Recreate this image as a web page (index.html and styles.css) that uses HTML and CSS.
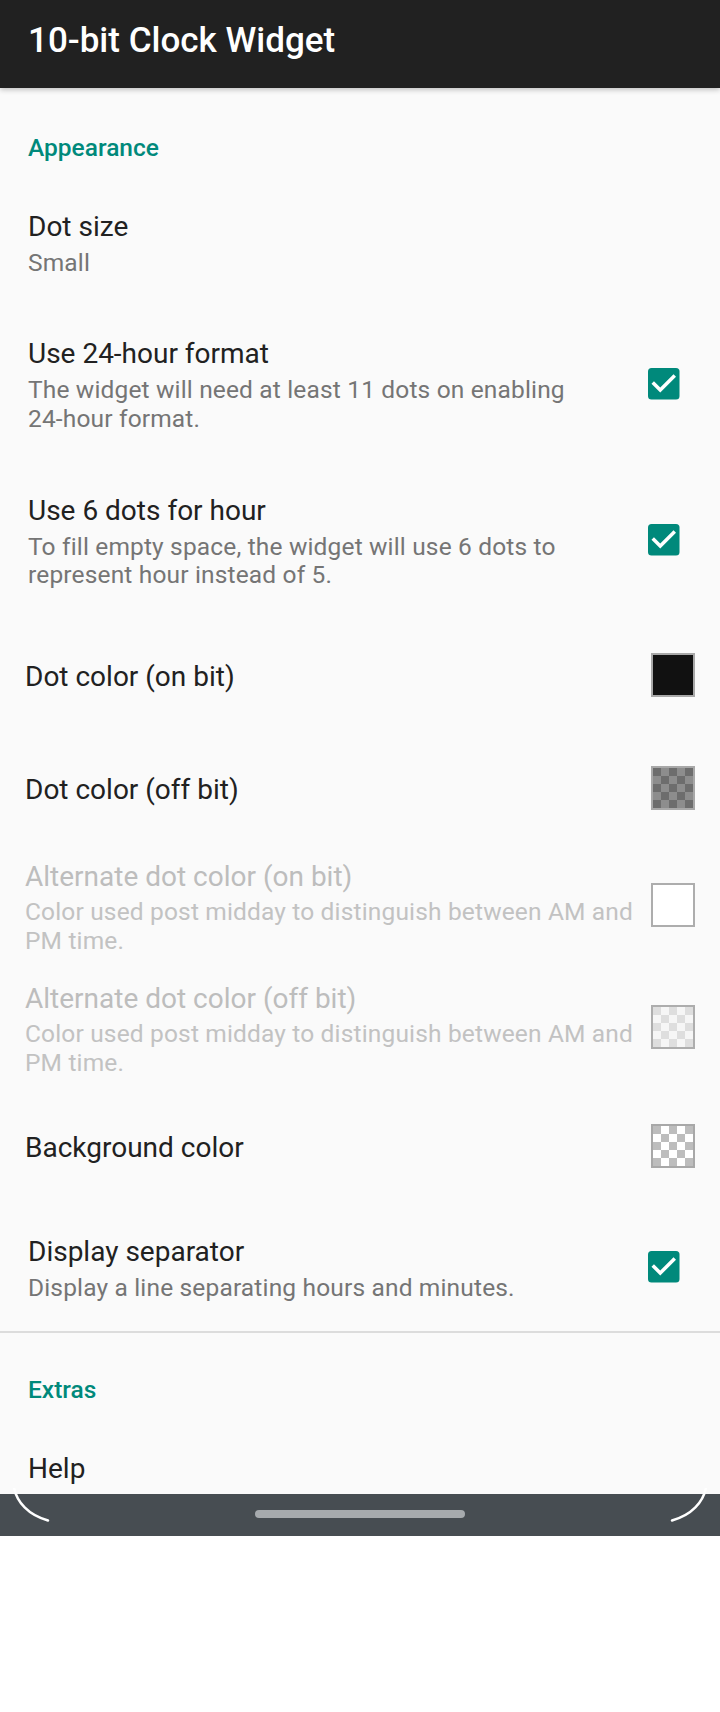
FILE: index.html
```html
<!DOCTYPE html>
<html>
<head>
<meta charset="utf-8">
<title>10-bit Clock Widget</title>
<link rel="stylesheet" href="styles.css">
</head>
<body>
<div class="screen">
  <header class="appbar">10-bit Clock Widget</header>
  <main class="content">
    <div class="cat">Appearance</div>

    <div class="pref">
      <div class="pref-text">
        <div class="pref-title">Dot size</div>
        <div class="pref-summary">Small</div>
      </div>
    </div>

    <div class="pref">
      <div class="pref-text">
        <div class="pref-title">Use 24-hour format</div>
        <div class="pref-summary">The widget will need at least 11 dots on enabling <span class="nowrap">24-hour</span> format.</div>
      </div>
      <svg class="checkbox" viewBox="3 3 18 18" width="31.5" height="31.5"><rect x="3" y="3" width="18" height="18" rx="2" fill="#00897b"/><path d="M10 17l-5-5 1.41-1.41L10 14.17l7.59-7.59L19 8l-9 9z" fill="#fff"/></svg>
    </div>

    <div class="pref">
      <div class="pref-text">
        <div class="pref-title">Use 6 dots for hour</div>
        <div class="pref-summary">To fill empty space, the widget will use 6 dots to represent hour instead of 5.</div>
      </div>
      <svg class="checkbox" viewBox="3 3 18 18" width="31.5" height="31.5"><rect x="3" y="3" width="18" height="18" rx="2" fill="#00897b"/><path d="M10 17l-5-5 1.41-1.41L10 14.17l7.59-7.59L19 8l-9 9z" fill="#fff"/></svg>
    </div>

    <div class="pref-color">
      <div class="pref-text">
        <div class="pref-title">Dot color (on bit)</div>
      </div>
      <div class="swatch swatch-black"></div>
    </div>

    <div class="pref-color">
      <div class="pref-text">
        <div class="pref-title">Dot color (off bit)</div>
      </div>
      <div class="swatch swatch-offbit"></div>
    </div>

    <div class="pref-color pref-disabled">
      <div class="pref-text">
        <div class="pref-title">Alternate dot color (on bit)</div>
        <div class="pref-summary">Color used post midday to distinguish between AM and PM time.</div>
      </div>
      <div class="swatch swatch-empty"></div>
    </div>

    <div class="pref-color pref-disabled">
      <div class="pref-text">
        <div class="pref-title">Alternate dot color (off bit)</div>
        <div class="pref-summary">Color used post midday to distinguish between AM and PM time.</div>
      </div>
      <div class="swatch swatch-alt-off"></div>
    </div>

    <div class="pref-color pref-bg">
      <div class="pref-text">
        <div class="pref-title">Background color</div>
      </div>
      <div class="swatch swatch-bg"></div>
    </div>

    <div class="pref">
      <div class="pref-text">
        <div class="pref-title">Display separator</div>
        <div class="pref-summary">Display a line separating hours and minutes.</div>
      </div>
      <svg class="checkbox" viewBox="3 3 18 18" width="31.5" height="31.5"><rect x="3" y="3" width="18" height="18" rx="2" fill="#00897b"/><path d="M10 17l-5-5 1.41-1.41L10 14.17l7.59-7.59L19 8l-9 9z" fill="#fff"/></svg>
    </div>

    <div class="divider"></div>

    <div class="cat cat-extras">Extras</div>

    <div class="pref">
      <div class="pref-text">
        <div class="pref-title">Help</div>
      </div>
    </div>
  </main>
  <nav class="navbar">
    <div class="nav-pill"></div>
    <svg class="corners" width="720" height="36" viewBox="0 0 720 36">
      <path d="M14 0 C17 14 28 27 48 32.5" fill="none" stroke="#fff" stroke-width="2.5" stroke-linecap="round"/>
      <path d="M706 0 C703 14 692 27 672 32.5" fill="none" stroke="#fff" stroke-width="2.5" stroke-linecap="round"/>
    </svg>
  </nav>
</div>
</body>
</html>
```

FILE: styles.css
```css
* { box-sizing: border-box; }

html, body {
  margin: 0;
  padding: 0;
  background: #ffffff;
}

body {
  font-family: Roboto, "Noto Sans", "Liberation Sans", sans-serif;
}

.screen {
  width: 720px;
  height: 1712px;
  background: #ffffff;
}

.appbar {
  position: relative;
  z-index: 2;
  height: 88px;
  padding: 20px 0 0 28px;
  background: #212121;
  color: #ffffff;
  font-size: 35px;
  line-height: 41px;
  font-weight: 500;
  box-shadow: 0 2px 5px rgba(0, 0, 0, 0.22);
}

.content {
  height: 1406px;
  overflow: hidden;
  background: #fafafa;
}

.cat {
  padding: 46px 28px 15.2px 28px;
  color: #00897b;
  font-size: 24.5px;
  line-height: 28.7px;
  font-weight: 500;
}

.cat-extras {
  padding-top: 43.6px;
}

.pref {
  display: flex;
  align-items: center;
  padding: 31.7px 40.5px 28.3px 28px;
}

.pref-text {
  flex: 1;
  min-width: 0;
}

.pref-title {
  font-size: 28px;
  line-height: 33px;
  color: #212121;
}

.pref-summary {
  margin-top: 6px;
  font-size: 24.5px;
  line-height: 28.7px;
  letter-spacing: 0.16px;
  color: #757575;
}

.nowrap {
  white-space: nowrap;
}

.checkbox {
  flex: none;
  display: block;
  margin-left: 28px;
  margin-bottom: 3.4px;
}

.pref-color {
  display: flex;
  align-items: center;
  min-height: 113px;
  padding: 0 25px 0 25px;
}

.pref-color .pref-text {
  margin-top: 4.2px;
}

.pref-disabled {
  min-height: 122px;
}

.pref-disabled .pref-text {
  margin-top: 4.6px;
}

.pref-disabled .pref-title {
  color: #bdbdbd;
}

.pref-disabled .pref-summary {
  margin-top: 4.5px;
  line-height: 29.3px;
  color: #c2c2c2;
}

.pref-bg {
  min-height: 114.6px;
}

.swatch {
  flex: none;
  width: 44px;
  height: 44px;
  margin-left: 6px;
  border: 2px solid #a8a8a8;
}

.swatch-black {
  background: #111111;
}

.swatch-offbit {
  background: conic-gradient(#8d8d8d 0 25%, #6d6d6d 0 50%, #8d8d8d 0 75%, #6d6d6d 0) 0 0 / 16px 16px;
}

.swatch-empty {
  background: #ffffff;
  border-color: #adadad;
}

.swatch-alt-off {
  background: conic-gradient(#f6f6f6 0 25%, #dedede 0 50%, #f6f6f6 0 75%, #dedede 0) 0 0 / 16px 16px;
  border-color: #adadad;
}

.swatch-bg {
  background: conic-gradient(#ffffff 0 25%, #bdbdbd 0 50%, #ffffff 0 75%, #bdbdbd 0) 0 0 / 16px 16px;
}

.divider {
  height: 2px;
  background: #dcdcdc;
}

.navbar {
  position: relative;
  height: 42px;
  padding-top: 16px;
  background: #474d52;
  display: flex;
  justify-content: center;
  align-items: flex-start;
}

.nav-pill {
  width: 210px;
  height: 8px;
  border-radius: 4px;
  background: #a6aaad;
}

.corners {
  position: absolute;
  left: 0;
  top: -6px;
}
```
